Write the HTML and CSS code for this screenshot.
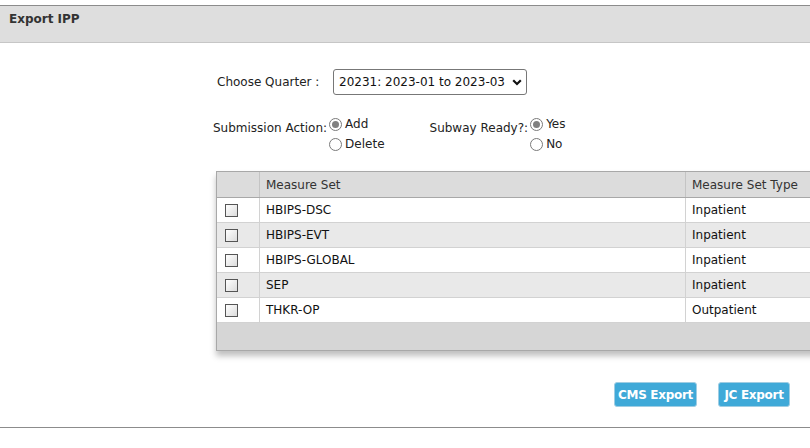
FILE: index.html
```html
<!DOCTYPE html>
<html lang="en">
<head>
    <meta charset="UTF-8">
    <title>Export IPP</title>
    <link rel="stylesheet" href="styles.css">
</head>
<body>
    <div class="page">
        <div class="panel-head">Export IPP</div>

        <div class="panel-body">
            <div class="form-row quarter-row">
                <label class="lbl">Choose Quarter :</label>
                <div class="fake-select">
                    <span>20231: 2023-01 to 2023-03</span>
                    <svg width="10" height="7" viewBox="0 0 10 7"><path d="M1.2 1.3 L5 5 L8.8 1.3" fill="none" stroke="#111" stroke-width="2.2"/></svg>
                </div>
            </div>

            <div class="form-row radio-row">
                <span class="lbl">Submission Action:</span>
                <div class="radio-group">
                    <label class="radio"><span class="dot checked"></span>Add</label>
                    <label class="radio"><span class="dot"></span>Delete</label>
                </div>
                <span class="lbl subway">Subway Ready?:</span>
                <div class="radio-group">
                    <label class="radio"><span class="dot checked"></span>Yes</label>
                    <label class="radio"><span class="dot"></span>No</label>
                </div>
            </div>

            <div class="grid-wrap">
                <table class="grid">
                    <thead>
                        <tr>
                            <th class="chk-col"></th>
                            <th class="name-col">Measure Set</th>
                            <th>Measure Set Type</th>
                        </tr>
                    </thead>
                    <tbody>
                        <tr><td class="chk-col"><span class="box"></span></td><td>HBIPS-DSC</td><td>Inpatient</td></tr>
                        <tr class="alt"><td class="chk-col"><span class="box"></span></td><td>HBIPS-EVT</td><td>Inpatient</td></tr>
                        <tr><td class="chk-col"><span class="box"></span></td><td>HBIPS-GLOBAL</td><td>Inpatient</td></tr>
                        <tr class="alt"><td class="chk-col"><span class="box"></span></td><td>SEP</td><td>Inpatient</td></tr>
                        <tr><td class="chk-col"><span class="box"></span></td><td>THKR-OP</td><td>Outpatient</td></tr>
                    </tbody>
                </table>
                <div class="grid-foot"></div>
            </div>

            <div class="actions">
                <button class="btn cms">CMS Export</button>
                <button class="btn jc">JC Export</button>
            </div>
        </div>
        <div class="panel-end"></div>
    </div>
</body>
</html>
```

FILE: styles.css
```css
body {
    margin: 0;
    background: #fff;
    font-family: "DejaVu Sans", Verdana, sans-serif;
    font-size: 12px;
    color: #222;
    overflow: hidden;
}

.page {
    padding-top: 5px;
}

.panel-head {
    background: #dedede;
    border-top: 1px solid #8c8c8c;
    border-bottom: 1px solid #c6c6c6;
    height: 38px;
    box-sizing: border-box;
    padding: 6px 9px;
    font-weight: bold;
    color: #333;
}

.panel-body {
    padding: 26px 0 0 213px;
}

.form-row {
    display: flex;
}

.quarter-row {
    align-items: center;
    padding-left: 4px;
}

.quarter-row .lbl {
    width: 116px;
}

.fake-select {
    display: flex;
    align-items: center;
    justify-content: space-between;
    width: 194px;
    height: 26px;
    box-sizing: border-box;
    border: 1px solid #777;
    border-radius: 3px;
    padding: 0 4px 0 5px;
    color: #111;
}

.radio-row {
    margin-top: 21px;
    align-items: flex-start;
}

.radio-row .lbl {
    padding-top: 5px;
}

.radio-group {
    display: flex;
    flex-direction: column;
    gap: 4px;
}

.radio {
    display: flex;
    align-items: center;
    gap: 3px;
    height: 16px;
}

.dot {
    width: 13px;
    height: 13px;
    border: 1px solid #7a7a7a;
    border-radius: 50%;
    box-sizing: border-box;
    background: #fff;
    position: relative;
    margin-left: 2px;
}

.dot.checked::after {
    content: "";
    position: absolute;
    left: 2px;
    top: 2px;
    width: 7px;
    height: 7px;
    border-radius: 50%;
    background: #808080;
}

.subway {
    margin-left: 45px;
}

.grid-wrap {
    margin: 19px 0 0 3px;
    width: 640px;
    border: 1px solid #a8a8a8;
    box-shadow: 0 5px 6px rgba(0, 0, 0, 0.25);
}

.grid {
    width: 100%;
    border-collapse: collapse;
}

.grid th {
    background: #dcdcdc;
    font-weight: normal;
    text-align: left;
    color: #333;
    height: 25px;
    padding: 0 6px;
    border-bottom: 1px solid #a8a8a8;
    border-right: 1px solid #c4c4c4;
}

.grid td {
    height: 24px;
    padding: 0 6px;
    color: #111;
    border-bottom: 1px solid #d2d2d2;
    border-right: 1px solid #d2d2d2;
}

.grid tr.alt td {
    background: #e9e9e9;
}

.grid .chk-col {
    width: 28px;
    padding-left: 8px;
}

.grid .name-col {
    width: 413px;
}

.box {
    display: block;
    width: 13px;
    height: 13px;
    box-sizing: border-box;
    border: 1px solid #555;
    background: linear-gradient(135deg, #fff, #dcdcdc);
}

.grid-foot {
    height: 27px;
    background: #d6d6d6;
}

.actions {
    display: flex;
    gap: 21px;
    margin: 31px 0 0 401px;
}

.btn {
    font-family: "DejaVu Sans", Verdana, sans-serif;
    font-size: 12px;
    font-weight: bold;
    color: #fff;
    background: #3fa9d8;
    border: 1px solid #9fcde3;
    border-radius: 3px;
    height: 25px;
    padding: 0;
    letter-spacing: -0.3px;
}

.btn.cms {
    width: 83px;
}

.btn.jc {
    width: 72px;
}

.panel-end {
    margin-top: 20px;
    border-top: 1px solid #8c8c8c;
}
```
